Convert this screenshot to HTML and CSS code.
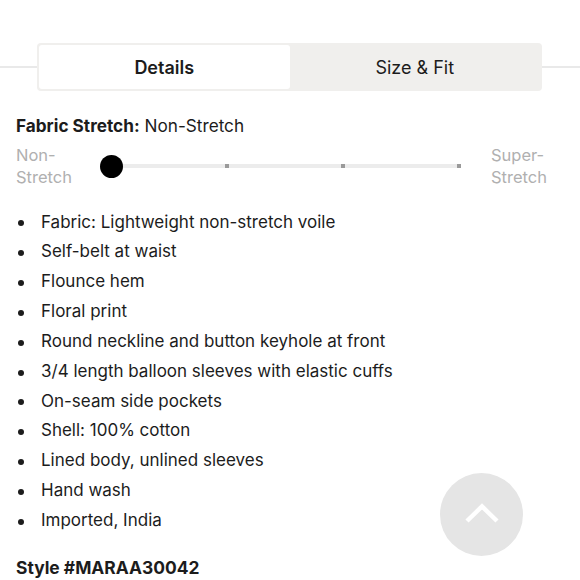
FILE: index.html
```html
<!DOCTYPE html>
<html lang="en">
<head>
<meta charset="utf-8">
<title>Details</title>
<link rel="stylesheet" href="styles.css">
</head>
<body>
<div class="tabs-row">
  <div class="rule"></div>
  <div class="tabs">
    <div class="tab tab-active">Details</div>
    <div class="tab">Size &amp; Fit</div>
  </div>
  <div class="rule"></div>
</div>

<div class="content">
  <h2 class="stretch-title"><strong>Fabric Stretch:</strong> Non-Stretch</h2>
  <div class="slider-row">
    <div class="slider-label">Non-<br>Stretch</div>
    <div class="track">
      <span class="stop"><span class="dot"></span></span>
      <span class="stop"><span class="tick"></span></span>
      <span class="stop"><span class="tick"></span></span>
      <span class="stop"><span class="tick"></span></span>
    </div>
    <div class="slider-label slider-label-right">Super-<br>Stretch</div>
  </div>

  <ul class="features">
    <li>Fabric: Lightweight non-stretch voile</li>
    <li>Self-belt at waist</li>
    <li>Flounce hem</li>
    <li>Floral print</li>
    <li>Round neckline and button keyhole at front</li>
    <li>3/4 length balloon sleeves with elastic cuffs</li>
    <li>On-seam side pockets</li>
    <li>Shell: 100% cotton</li>
    <li>Lined body, unlined sleeves</li>
    <li>Hand wash</li>
    <li>Imported, India</li>
  </ul>

  <p class="style-no">Style #MARAA30042</p>
</div>

<button class="to-top" aria-label="Back to top">
  <svg width="34" height="20" viewBox="0 0 34 20"><polyline points="2,18 17,3.5 32,18" fill="none" stroke="#fff" stroke-width="4.5"/></svg>
</button>
</body>
</html>
```
FILE: styles.css
```css
* { box-sizing: border-box; }
html, body { margin: 0; padding: 0; background: #fff; }
body {
  font-family: Inter, Roboto, "Liberation Sans", sans-serif;
  color: #1c1c1c;
  width: 580px;
  height: 580px;
  overflow: hidden;
  position: relative;
}
.tabs-row {
  display: grid;
  grid-template-columns: 37px 505px 1fr;
  align-items: center;
  padding-top: 43px;
}
.rule { height: 2px; background: #e9e9e9; }
.tabs {
  display: grid;
  grid-template-columns: 1fr 1fr;
  height: 48px;
  padding: 2px;
  background: #f0efed;
  border-radius: 4px;
}
.tab {
  display: flex;
  align-items: center;
  justify-content: center;
  font-size: 18px;
  color: #1c1c1c;
}
.tab-active {
  background: #fff;
  border-radius: 3px;
  font-weight: 600;
}
.content { padding: 0 16px; }
.stretch-title {
  margin: 24px 0 0;
  font-size: 17.2px;
  line-height: 22px;
  font-weight: 400;
}
.stretch-title strong { font-weight: 700; }
.slider-row {
  display: flex;
  align-items: center;
  margin-top: 7px;
}
.slider-label {
  width: 84px;
  font-size: 16.5px;
  line-height: 22px;
  color: #b0b0b0;
}
.slider-label-right { width: auto; margin-left: 21px; }
.track {
  display: flex;
  gap: 94px;
  align-items: center;
  background: linear-gradient(#ececec, #ececec) 11px 50% / 350px 4px no-repeat;
}
.stop {
  width: 22px;
  height: 23px;
  display: flex;
  align-items: center;
  justify-content: center;
}
.dot { width: 23px; height: 23px; border-radius: 50%; background: #000; flex: none; }
.tick { width: 4px; height: 4px; background: #9a9a9a; }
.features {
  list-style: none;
  margin: 19.5px 0 0;
  padding: 0;
}
.features li {
  display: flex;
  align-items: center;
  font-size: 17px;
  line-height: 29.85px;
}
.features li::before {
  content: "";
  width: 6px;
  height: 6px;
  border-radius: 50%;
  background: #1c1c1c;
  margin: 2px 17px 0 2px;
  flex: none;
}
.style-no {
  margin: 21px 0 0;
  font-size: 17.4px;
  line-height: 22px;
  font-weight: 700;
}
.to-top {
  position: absolute;
  left: 440px;
  top: 473px;
  width: 83px;
  height: 83px;
  border-radius: 50%;
  border: 0;
  padding: 0 0 4px;
  background: #e5e5e5;
  display: flex;
  align-items: center;
  justify-content: center;
}
```
